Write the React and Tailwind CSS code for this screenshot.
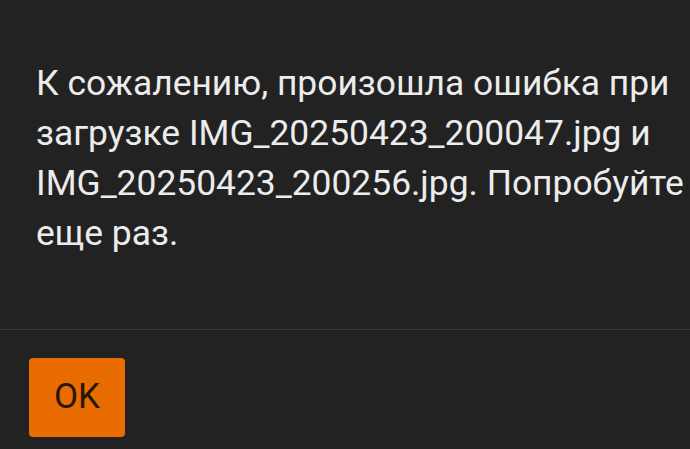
export default function App() {
  return (
    <div className="w-[690px] h-[449px] bg-[#222222] overflow-hidden font-['Roboto',sans-serif]">
      <div className="pl-[36px] pr-1 pt-[58px] h-[329px]">
        <p className="text-[35.4px] leading-[50px] text-[#ececec]">
          К сожалению, произошла ошибка при загрузке IMG_20250423_200047.jpg и IMG_20250423_200256.jpg. Попробуйте еще раз.
        </p>
      </div>
      <div className="h-px bg-[#363636]" />
      <div className="pl-[29px] pt-[28px]">
        <button className="w-[96px] h-[79px] rounded-[4px] bg-[#e86c00] text-[35px] text-[#2a1605]">
          OK
        </button>
      </div>
    </div>
  );
}
